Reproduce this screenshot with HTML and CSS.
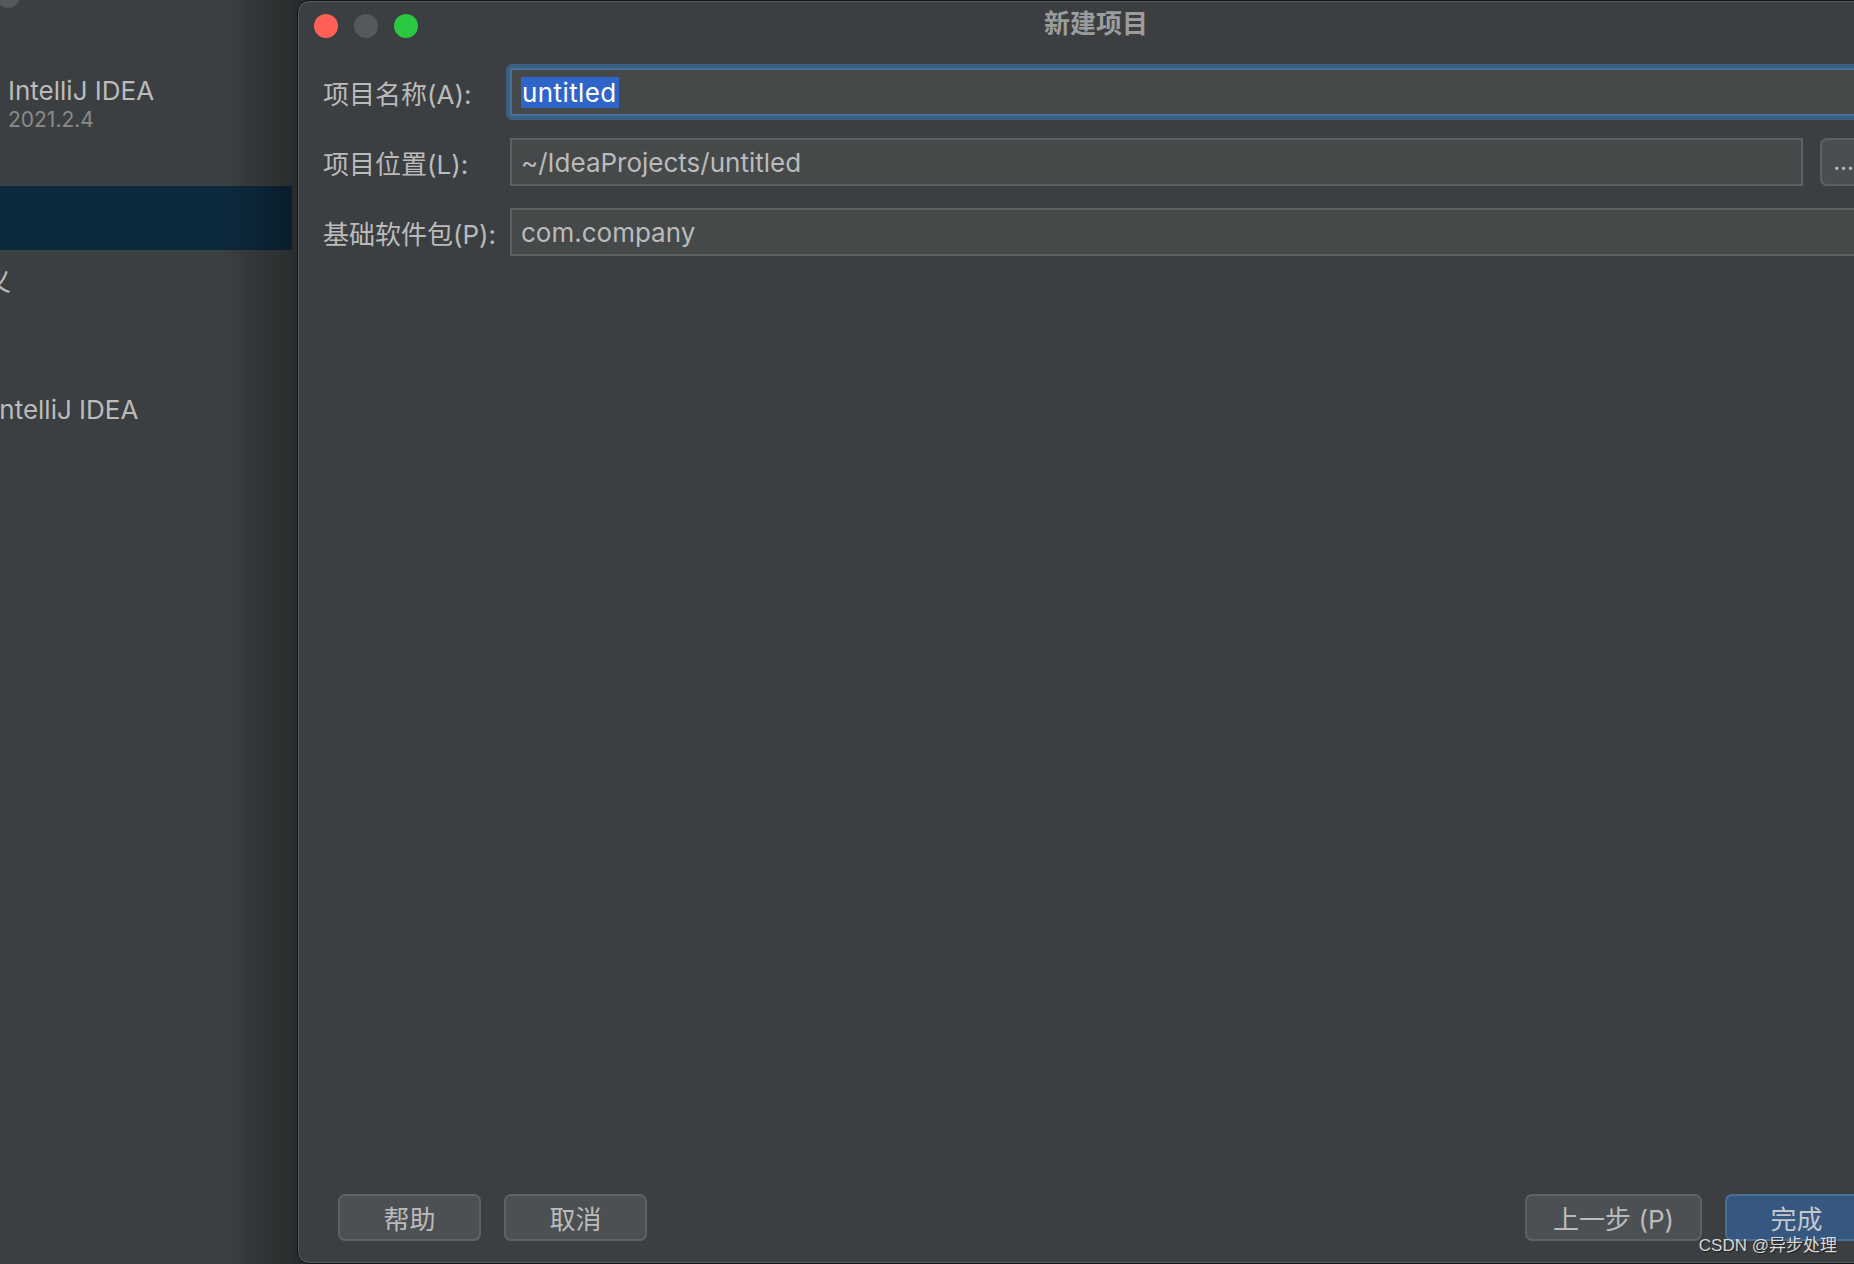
FILE: index.html
```html
<!DOCTYPE html>
<html lang="zh-CN">
<head>
<meta charset="utf-8">
<title>新建项目</title>
<link rel="stylesheet" href="styles.css">
</head>
<body>
<div class="screen">
  <aside class="sidebar">
    <span class="welcome-light"></span>
    <div class="product">
      <div class="product-name">IntelliJ IDEA</div>
      <div class="product-version">2021.2.4</div>
    </div>
    <ul class="nav">
      <li class="nav-item active">项目</li>
      <li class="nav-item">自定义</li>
      <li class="nav-item">插件</li>
      <li class="nav-item">学习 IntelliJ IDEA</li>
    </ul>
  </aside>

  <section class="dialog">
    <header class="titlebar">
      <div class="lights">
        <span class="light red"></span>
        <span class="light gray"></span>
        <span class="light green"></span>
      </div>
      <div class="title">新建项目</div>
      <div></div>
    </header>

    <div class="form">
      <label class="label">项目名称(A):</label>
      <div class="input focused"><span class="sel">untitled</span></div>

      <label class="label">项目位置(L):</label>
      <div class="field-row">
        <div class="input">~/IdeaProjects/untitled</div>
        <div class="browse">...</div>
      </div>

      <label class="label">基础软件包(P):</label>
      <div class="input">com.company</div>
    </div>

    <footer class="footer">
      <button class="btn">帮助</button>
      <button class="btn">取消</button>
      <div class="spacer"></div>
      <button class="btn">上一步 (P)</button>
      <button class="btn primary">完成</button>
    </footer>
  </section>

  <div class="watermark">CSDN @异步处理</div>
</div>
</body>
</html>
```

FILE: styles.css
```css
* { box-sizing: border-box; }

html, body {
  margin: 0;
  padding: 0;
  background: #2a2b2d;
}

body {
  font-family: Inter, "Noto Sans CJK SC", sans-serif;
}

.screen {
  position: relative;
  width: 1854px;
  height: 1264px;
  display: flex;
  overflow: hidden;
  background: #2a2b2d;
}

/* ---------- welcome sidebar (partially off-screen) ---------- */
.sidebar {
  position: relative;
  flex: 0 0 292px;
  overflow: hidden;
  background: #3c3f41;
  padding-top: 75px;
}

.sidebar::after {
  content: "";
  position: absolute;
  inset: 0;
  background: linear-gradient(to right, rgba(0,0,0,0) 0, rgba(0,0,0,0) 225px, rgba(0,0,0,0.3) 292px);
  pointer-events: none;
}

.welcome-light {
  position: absolute;
  left: -4px;
  top: -16px;
  width: 24px;
  height: 24px;
  border-radius: 50%;
  background: #56595b;
}

.product {
  padding-left: 8px;
}

.product-name {
  font-size: 26px;
  line-height: 32px;
  color: #bbbbbb;
}

.product-version {
  margin-top: 0;
  font-size: 21px;
  line-height: 26px;
  color: #8a8a8a;
}

.nav {
  list-style: none;
  margin: 53px 0 0 -67px;
  padding: 0;
}

.nav-item {
  height: 64px;
  line-height: 64px;
  font-size: 26px;
  color: #bbbbbb;
  white-space: nowrap;
}

.nav-item.active {
  background: #0d293e;
  color: #ffffff;
}

/* ---------- dialog ---------- */
.dialog {
  flex: 0 0 1598px;
  margin-left: 5px;
  height: 1264px;
  display: flex;
  flex-direction: column;
  background: #3c3f41;
  border: 1px solid #121314;
  border-radius: 12px;
  box-shadow: inset 0 0 0 1px #56595b;
}

.titlebar {
  height: 49px;
  display: grid;
  grid-template-columns: 1fr auto 1fr;
  align-items: center;
}

.lights {
  display: flex;
  gap: 16px;
  padding-left: 16px;
}

.light {
  width: 24px;
  height: 24px;
  border-radius: 50%;
}

.light.red { background: #fe5f57; }
.light.gray { background: #56595b; }
.light.green { background: #29c840; }

.title {
  font-size: 26px;
  line-height: 26px;
  padding-bottom: 3px;
  font-weight: 700;
  color: #9c9c9c;
}

.form {
  display: grid;
  grid-template-columns: 187px 1fr;
  row-gap: 22px;
  align-items: center;
  padding: 18px 27px 0 25px;
}

.label {
  font-size: 26px;
  color: #bbbbbb;
  white-space: nowrap;
}

.field-row {
  display: flex;
  gap: 17px;
}

.input {
  flex: 1;
  height: 48px;
  display: flex;
  align-items: center;
  padding: 0 9px;
  background: #45494a;
  border: 2px solid #5e6062;
  font-size: 26px;
  color: #bbbbbb;
  white-space: nowrap;
  overflow: hidden;
}

.input.focused {
  border-color: #4a7198;
  border-radius: 3px;
  box-shadow: 0 0 0 4px #3c5f85;
}

.sel {
  background: #2f65ca;
  color: #ffffff;
  padding: 0 2px 0 1px;
  letter-spacing: 0.4px;
}

.browse {
  flex: 0 0 47px;
  height: 48px;
  display: flex;
  align-items: center;
  justify-content: center;
  background: #4a4e50;
  border: 2px solid #5e6062;
  border-radius: 7px;
  font-size: 24px;
  color: #bbbbbb;
  padding-bottom: 2px;
}

.footer {
  margin-top: auto;
  display: flex;
  gap: 23px;
  padding: 0 26px 22px 40px;
}

.spacer { flex: 1; }

.btn {
  height: 47px;
  min-width: 143px;
  padding: 0 26px;
  background: #4c5052;
  border: 2px solid #5e6165;
  border-radius: 7px;
  font-family: Inter, "Noto Sans CJK SC", sans-serif;
  font-size: 26px;
  color: #bbbbbb;
}

.btn.primary {
  background: #365880;
  border-color: #4a6f97;
  color: #c4c8cc;
}

.watermark {
  position: absolute;
  right: 17px;
  bottom: 8px;
  font-family: "Liberation Sans", "Noto Sans CJK SC", sans-serif;
  font-size: 17px;
  color: rgba(255, 255, 255, 0.82);
  text-shadow: 1px 1px 1px rgba(0, 0, 0, 0.5);
  white-space: nowrap;
}
```
